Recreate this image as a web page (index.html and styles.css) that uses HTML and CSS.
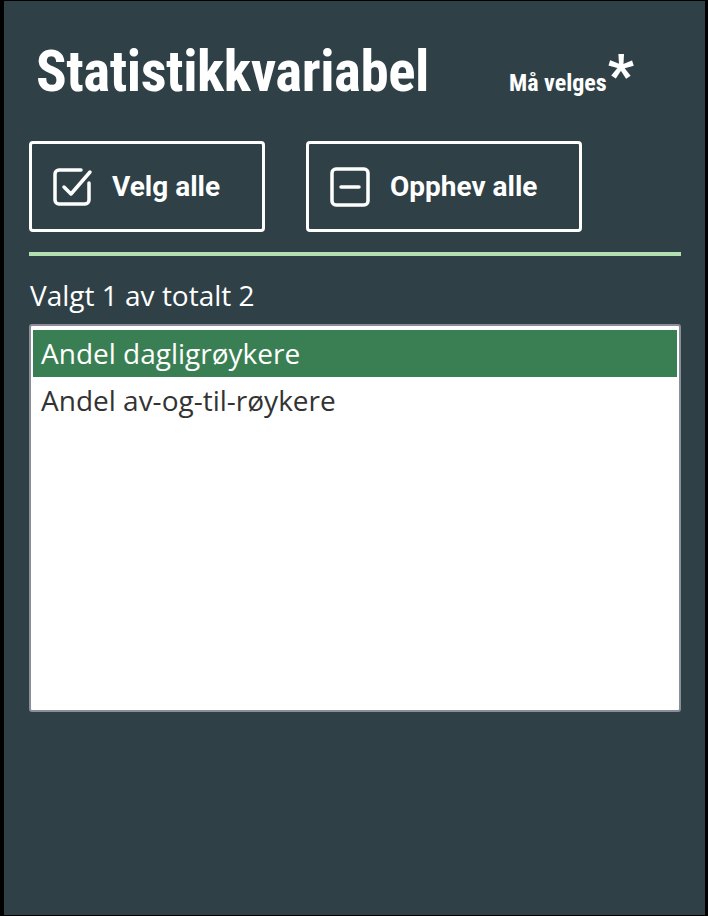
FILE: index.html
```html
<!DOCTYPE html>
<html lang="no">
<head>
<meta charset="utf-8">
<link rel="stylesheet" href="styles.css">
</head>
<body>
<div class="frame">
  <div class="header">
    <h1 class="title">Statistikkvariabel</h1>
    <span class="required">Må velges<span class="star">*</span></span>
  </div>
  <div class="buttons">
    <button class="btn btn-select">
      <svg class="icon" viewBox="0 0 40 40" width="40" height="40" fill="none" stroke="#fff" stroke-width="3.5" stroke-linecap="round" stroke-linejoin="round">
        <path d="M36 16v17a4 4 0 0 1-4 4H6a4 4 0 0 1-4-4V7a4 4 0 0 1 4-4h22"/>
        <path d="M11 20l7 7 L37 5"/>
      </svg>
      <span>Velg alle</span>
    </button>
    <button class="btn btn-clear">
      <svg class="icon" viewBox="0 0 40 40" width="40" height="40" fill="none" stroke="#fff" stroke-width="3.5" stroke-linecap="round" stroke-linejoin="round">
        <rect x="2" y="2" width="36" height="36" rx="4"/>
        <path d="M11 20h18"/>
      </svg>
      <span>Opphev alle</span>
    </button>
  </div>
  <div class="divider"></div>
  <div class="count">Valgt 1 av totalt 2</div>
  <div class="listbox">
    <div class="option selected">Andel dagligrøykere</div>
    <div class="option">Andel av-og-til-røykere</div>
  </div>
</div>
</body>
</html>
```
FILE: styles.css
```css
html, body {
  margin: 0;
  padding: 0;
}
body {
  width: 708px;
  height: 916px;
  background: #000;
}
.frame {
  box-sizing: border-box;
  width: 708px;
  height: 916px;
  border-style: solid;
  border-color: #000;
  border-width: 1px 3px 1px 4px;
  background: #2f4147;
  padding: 0 24px 0 25px;
  color: #fff;
}
.header {
  display: flex;
  align-items: baseline;
  height: 110px;
  padding-top: 41px;
  box-sizing: border-box;
}
.title {
  margin: 0;
  font-family: Roboto, "Liberation Sans", sans-serif;
  font-weight: 700;
  font-stretch: condensed;
  font-size: 57px;
  line-height: 60px;
  letter-spacing: -0.45px;
  padding-left: 7px;
}
.required {
  margin-left: 80px;
  font-family: Roboto, "Liberation Sans", sans-serif;
  font-weight: 700;
  font-stretch: condensed;
  font-size: 24px;
}
.star {
  font-size: 58px;
  line-height: 0;
  position: relative;
  top: 4px;
  margin-left: 1px;
}
.buttons {
  display: flex;
  gap: 41px;
  margin-top: 30px;
}
.btn {
  display: flex;
  align-items: center;
  box-sizing: border-box;
  height: 91px;
  border: 3px solid #fff;
  border-radius: 4px;
  background: transparent;
  color: #fff;
  font-family: Roboto, "Liberation Sans", sans-serif;
  font-weight: 700;
  font-size: 28px;
  padding: 0 0 0 21px;
  gap: 19px;
  cursor: pointer;
}
.btn-select { width: 236px; }
.btn-clear { width: 276px; gap: 20px; }
.icon { display: block; flex: none; }
.divider {
  height: 4px;
  background: #b4dfb1;
  margin-top: 20px;
}
.count {
  font-family: "Open Sans", "Noto Sans", sans-serif;
  font-size: 28px;
  line-height: 36px;
  margin-top: 21px;
  padding-left: 1px;
}
.listbox {
  box-sizing: border-box;
  margin-top: 11px;
  height: 388px;
  background: #fff;
  border: 2px solid #8b8e99;
  border-radius: 3px;
  padding: 4px 2px;
}
.option {
  font-family: "Open Sans", "Noto Sans", sans-serif;
  font-size: 28px;
  line-height: 47px;
  color: #333;
  padding-left: 8px;
}
.option.selected {
  background: #3a7f53;
  color: #fff;
}
```
